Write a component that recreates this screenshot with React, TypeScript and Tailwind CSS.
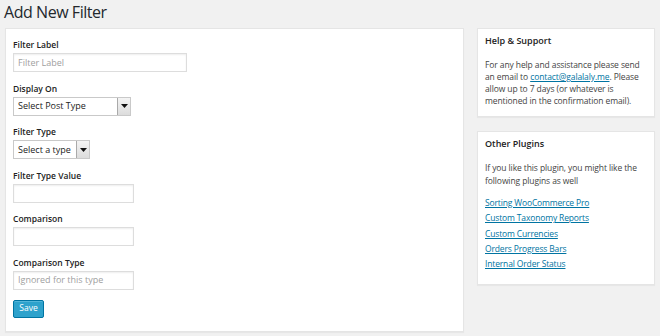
import React from "react";

const Label = ({ children }: { children: React.ReactNode }) => (
  <div className="h-[12px] leading-[12px] text-[8.5px] font-semibold text-[#222] whitespace-nowrap">{children}</div>
);

const TextInput = ({ w, placeholder }: { w: string; placeholder?: string }) => (
  <div
    className={`${w} h-[19px] mt-[2px] border border-[#dddddd] bg-white shadow-[inset_0_1px_2px_rgba(0,0,0,0.07)] flex items-center px-[4px] text-[9px] text-[#a0a0a0] whitespace-nowrap`}
  >
    {placeholder}
  </div>
);

const Select = ({ w, text }: { w: string; text: string }) => (
  <div className={`${w} h-[19px] mt-[2px] border border-[#c9c9c9] bg-white flex items-stretch text-[9px] text-[#222] whitespace-nowrap`}>
    <div className="flex-1 flex items-center px-[4px] overflow-hidden">{text}</div>
    <div className="w-[13px] border-l border-[#aaaaaa] bg-gradient-to-b from-[#f4f4f4] to-[#dcdcdc] flex items-center justify-center">
      <svg width="7" height="4" viewBox="0 0 7 4">
        <path d="M0 0 H7 L3.5 4 Z" fill="#111" />
      </svg>
    </div>
  </div>
);

const Gap = () => <div className="h-[10.5px]" />;

export default function App() {
  return (
    <div
      className="w-[660px] h-[336px] bg-[#f1f1f1] overflow-hidden text-[#444]"
      style={{ fontFamily: '"Open Sans", sans-serif' }}
    >
      <div className="pl-[4px] pt-[1px] h-[28px] text-[16px] tracking-[-0.45px] leading-[22px] text-[#23282d]">
        Add New Filter
      </div>
      <div className="flex items-start pl-[5px] gap-[13px]">
        <div className="w-[459px] h-[304px] bg-white border border-[#e5e5e5] shadow-[0_1px_1px_rgba(0,0,0,0.04)] pl-[7px] pt-[10px]">
          <Label>Filter Label</Label>
          <TextInput w="w-[174px]" placeholder="Filter Label" />
          <Gap />
          <Label>Display On</Label>
          <Select w="w-[118px]" text="Select Post Type" />
          <Gap />
          <Label>Filter Type</Label>
          <Select w="w-[77px]" text="Select a type" />
          <Gap />
          <Label>Filter Type Value</Label>
          <TextInput w="w-[121px]" />
          <Gap />
          <Label>Comparison</Label>
          <TextInput w="w-[121px]" />
          <Gap />
          <Label>Comparison Type</Label>
          <TextInput w="w-[121px]" placeholder="Ignored for this type" />
          <button className="mt-[10px] w-[31px] h-[18px] bg-[#2ea2cc] border border-[#0074a2] rounded-[2px] text-white text-[8.5px] leading-none shadow-[inset_0_1px_0_rgba(120,200,230,0.5)]">
            Save
          </button>
        </div>
        <div className="w-[178px] flex flex-col gap-[14px]">
          <div className="bg-white border border-[#e5e5e5] shadow-[0_1px_1px_rgba(0,0,0,0.04)] px-[7px] pt-[5px] pb-[9px]">
            <div className="text-[9px] font-semibold leading-[14px] text-[#222]">Help &amp; Support</div>
            <p className="mt-[11px] text-[8.5px] tracking-[-0.1px] leading-[12px] text-[#444]">
              For any help and assistance please send an email to{" "}
              <a className="text-[#0074a2] underline">contact@galalaly.me</a>. Please allow up to 7 days (or
              whatever is mentioned in the confirmation email).
            </p>
          </div>
          <div className="bg-white border border-[#e5e5e5] shadow-[0_1px_1px_rgba(0,0,0,0.04)] px-[7px] pt-[5px] pb-[13px]">
            <div className="text-[9px] font-semibold leading-[14px] text-[#222]">Other Plugins</div>
            <p className="mt-[11px] text-[8.5px] tracking-[-0.1px] leading-[12.5px] text-[#444]">
              If you like this plugin, you might like the following plugins as well
            </p>
            <div className="mt-[8px] flex flex-col text-[8.5px] tracking-[-0.15px] leading-[15.3px] text-[#0074a2] underline">
              <span>Sorting WooCommerce Pro</span>
              <span>Custom Taxonomy Reports</span>
              <span>Custom Currencies</span>
              <span>Orders Progress Bars</span>
              <span>Internal Order Status</span>
            </div>
          </div>
        </div>
      </div>
    </div>
  );
}
